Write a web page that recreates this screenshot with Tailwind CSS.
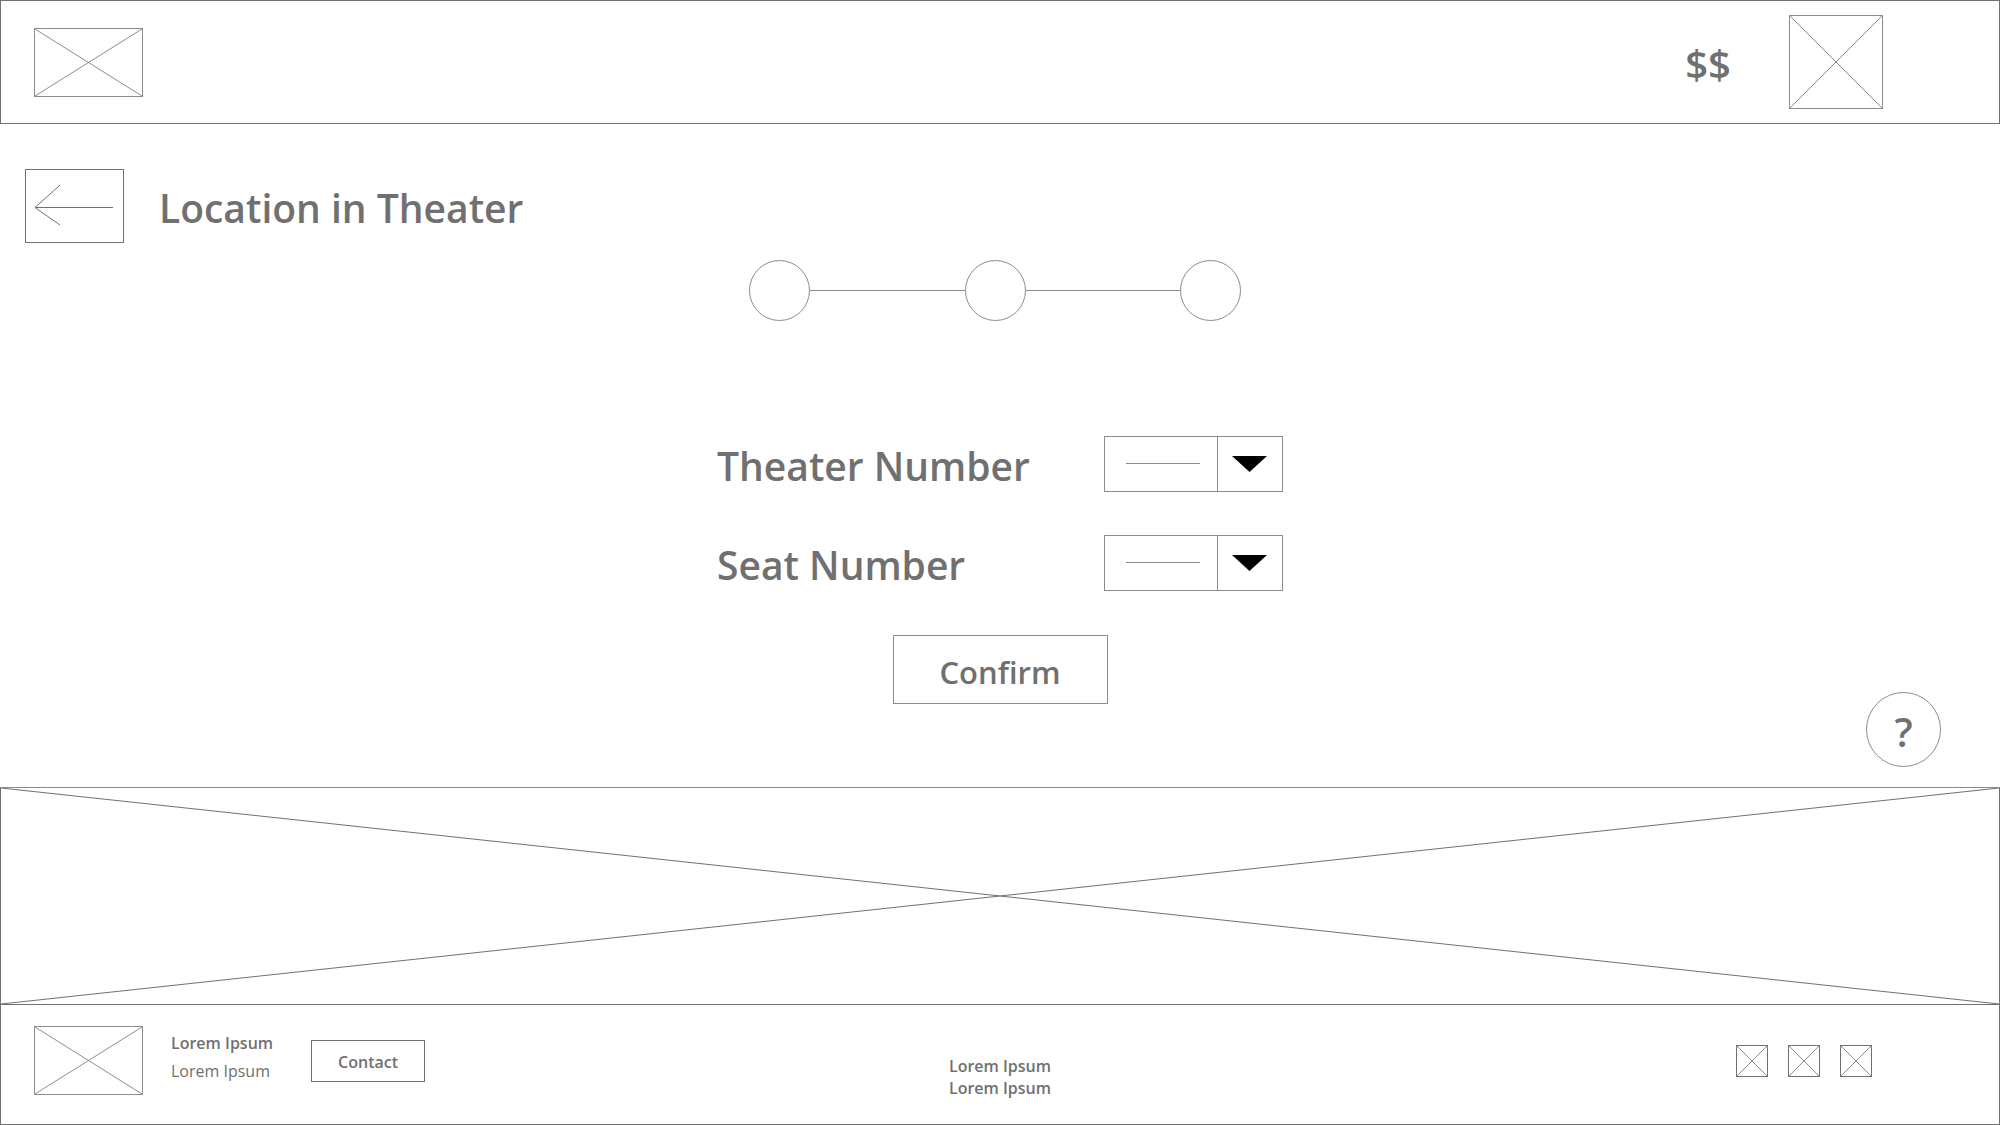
<!DOCTYPE html>
<html lang="en">
<head>
<meta charset="utf-8">
<meta name="viewport" content="width=device-width, initial-scale=1">
<title>Location in Theater</title>
<script src="https://cdn.jsdelivr.net/npm/@tailwindcss/browser@4"></script>
</head>
<body class="flex min-h-screen flex-col bg-white font-['Open_Sans','Noto_Sans',sans-serif] font-semibold text-[#707070]">

<header class="flex h-[124px] items-center justify-between border border-[#707070] pr-[116px] pl-[33px]">
  <a href="#" aria-label="Home" class="block h-[69px] w-[109px] border border-[#8c8c8c]">
    <svg class="size-full" viewBox="0 0 100 100" preserveAspectRatio="none" fill="none" stroke="#707070" stroke-width="0.8"><path d="M0 0L100 100M100 0L0 100" vector-effect="non-scaling-stroke"/></svg>
  </a>
  <div class="flex items-center gap-[58px]">
    <span class="pt-1 text-[40px] leading-[54px]">$$</span>
    <a href="#" aria-label="Profile" class="block size-[94px] border border-[#8c8c8c]">
      <svg class="size-full" viewBox="0 0 100 100" preserveAspectRatio="none" fill="none" stroke="#707070" stroke-width="0.8"><path d="M0 0L100 100M100 0L0 100" vector-effect="non-scaling-stroke"/></svg>
    </a>
  </div>
</header>

<main class="relative grow pt-[45px] pb-[83px]">
  <div class="flex items-center gap-[35px] pl-[25px]">
    <button type="button" aria-label="Back" class="h-[74px] w-[99px] border border-[#707070]">
      <svg class="size-full" viewBox="0 0 97 72" fill="none" stroke="#707070" stroke-width="1"><path d="M34 15L9 37.500L34 55"/><path d="M9 37.500H87"/></svg>
    </button>
    <h1 class="pt-1 text-[39px] leading-[54px]">Location in Theater</h1>
  </div>

  <div class="mx-auto w-[566px]">
    <ol aria-label="Progress" class="mt-[17px] ml-[32px] flex w-[492px] items-center">
      <li class="size-[61px] rounded-full border border-[#8c8c8c]"></li>
      <li aria-hidden="true" class="h-px grow bg-[#8c8c8c]"></li>
      <li class="size-[61px] rounded-full border border-[#8c8c8c]"></li>
      <li aria-hidden="true" class="h-px grow bg-[#8c8c8c]"></li>
      <li class="size-[61px] rounded-full border border-[#8c8c8c]"></li>
    </ol>

    <form class="mt-[115px] flex flex-col gap-[43px]">
      <div class="flex h-[56px] items-center justify-between">
        <label for="theater" class="pt-1 text-[39px] leading-[54px]">Theater Number</label>
        <div class="relative">
          <select id="theater" class="block h-[56px] w-[179px] appearance-none border border-[#8c8c8c] bg-white text-[16px]"><option value=""></option></select>
          <svg class="pointer-events-none absolute inset-0" width="179" height="56" viewBox="0 0 179 56" fill="none" stroke="#8c8c8c"><path d="M113.500 0V56M22 27.500H96"/><path d="M128 20H163L145.500 36Z" fill="#000" stroke="none"/></svg>
        </div>
      </div>
      <div class="flex h-[56px] items-center justify-between">
        <label for="seat" class="pt-1 text-[39px] leading-[54px]">Seat Number</label>
        <div class="relative">
          <select id="seat" class="block h-[56px] w-[179px] appearance-none border border-[#8c8c8c] bg-white text-[16px]"><option value=""></option></select>
          <svg class="pointer-events-none absolute inset-0" width="179" height="56" viewBox="0 0 179 56" fill="none" stroke="#8c8c8c"><path d="M113.500 0V56M22 27.500H96"/><path d="M128 20H163L145.500 36Z" fill="#000" stroke="none"/></svg>
        </div>
      </div>
      <button type="button" class="mt-px h-[69px] w-[215px] self-center border border-[#8c8c8c] pt-1 text-[31px] leading-[44px]">Confirm</button>
    </form>
  </div>

  <button type="button" aria-label="Help" class="absolute right-[59px] bottom-[20px] size-[75px] rounded-full border border-[#8c8c8c] pt-1 text-[40px] leading-[54px]">?</button>
</main>

<section aria-label="Banner" class="h-[217px] border border-b-0 border-[#707070] border-t-[#8c8c8c]">
  <svg class="size-full" viewBox="0 0 100 100" preserveAspectRatio="none" fill="none" stroke="#707070" stroke-width="1"><path d="M0 0L100 100M100 0L0 100" vector-effect="non-scaling-stroke"/></svg>
</section>

<footer class="grid h-[121px] grid-cols-3 border border-[#707070] pt-[21px] text-[16px] leading-[22px]">
  <div class="flex h-[69px] items-center pl-[33px]">
    <a href="#" aria-label="Home" class="block h-[69px] w-[109px] border border-[#8c8c8c]">
      <svg class="size-full" viewBox="0 0 100 100" preserveAspectRatio="none" fill="none" stroke="#707070" stroke-width="0.8"><path d="M0 0L100 100M100 0L0 100" vector-effect="non-scaling-stroke"/></svg>
    </a>
    <div class="ml-[28px] flex flex-col gap-[6px] pb-[7px]">
      <p>Lorem Ipsum</p>
      <p class="font-normal">Lorem Ipsum</p>
    </div>
    <button type="button" class="ml-[38px] h-[42px] w-[114px] border border-[#707070] pt-[2px]">Contact</button>
  </div>
  <div class="pt-[29px] text-center">
    <p>Lorem Ipsum</p>
    <p>Lorem Ipsum</p>
  </div>
  <div class="flex h-[69px] items-center justify-end gap-[20px] pr-[127px]">
    <a href="#" aria-label="Social link one" class="block size-[32px] border border-[#707070]">
      <svg class="size-full" viewBox="0 0 30 30" fill="none" stroke="#707070" stroke-width="0.8"><path d="M0 0L30 30M30 0L0 30"/></svg>
    </a>
    <a href="#" aria-label="Social link two" class="block size-[32px] border border-[#707070]">
      <svg class="size-full" viewBox="0 0 30 30" fill="none" stroke="#707070" stroke-width="0.8"><path d="M0 0L30 30M30 0L0 30"/></svg>
    </a>
    <a href="#" aria-label="Social link three" class="block size-[32px] border border-[#707070]">
      <svg class="size-full" viewBox="0 0 30 30" fill="none" stroke="#707070" stroke-width="0.8"><path d="M0 0L30 30M30 0L0 30"/></svg>
    </a>
  </div>
</footer>

</body>
</html>
